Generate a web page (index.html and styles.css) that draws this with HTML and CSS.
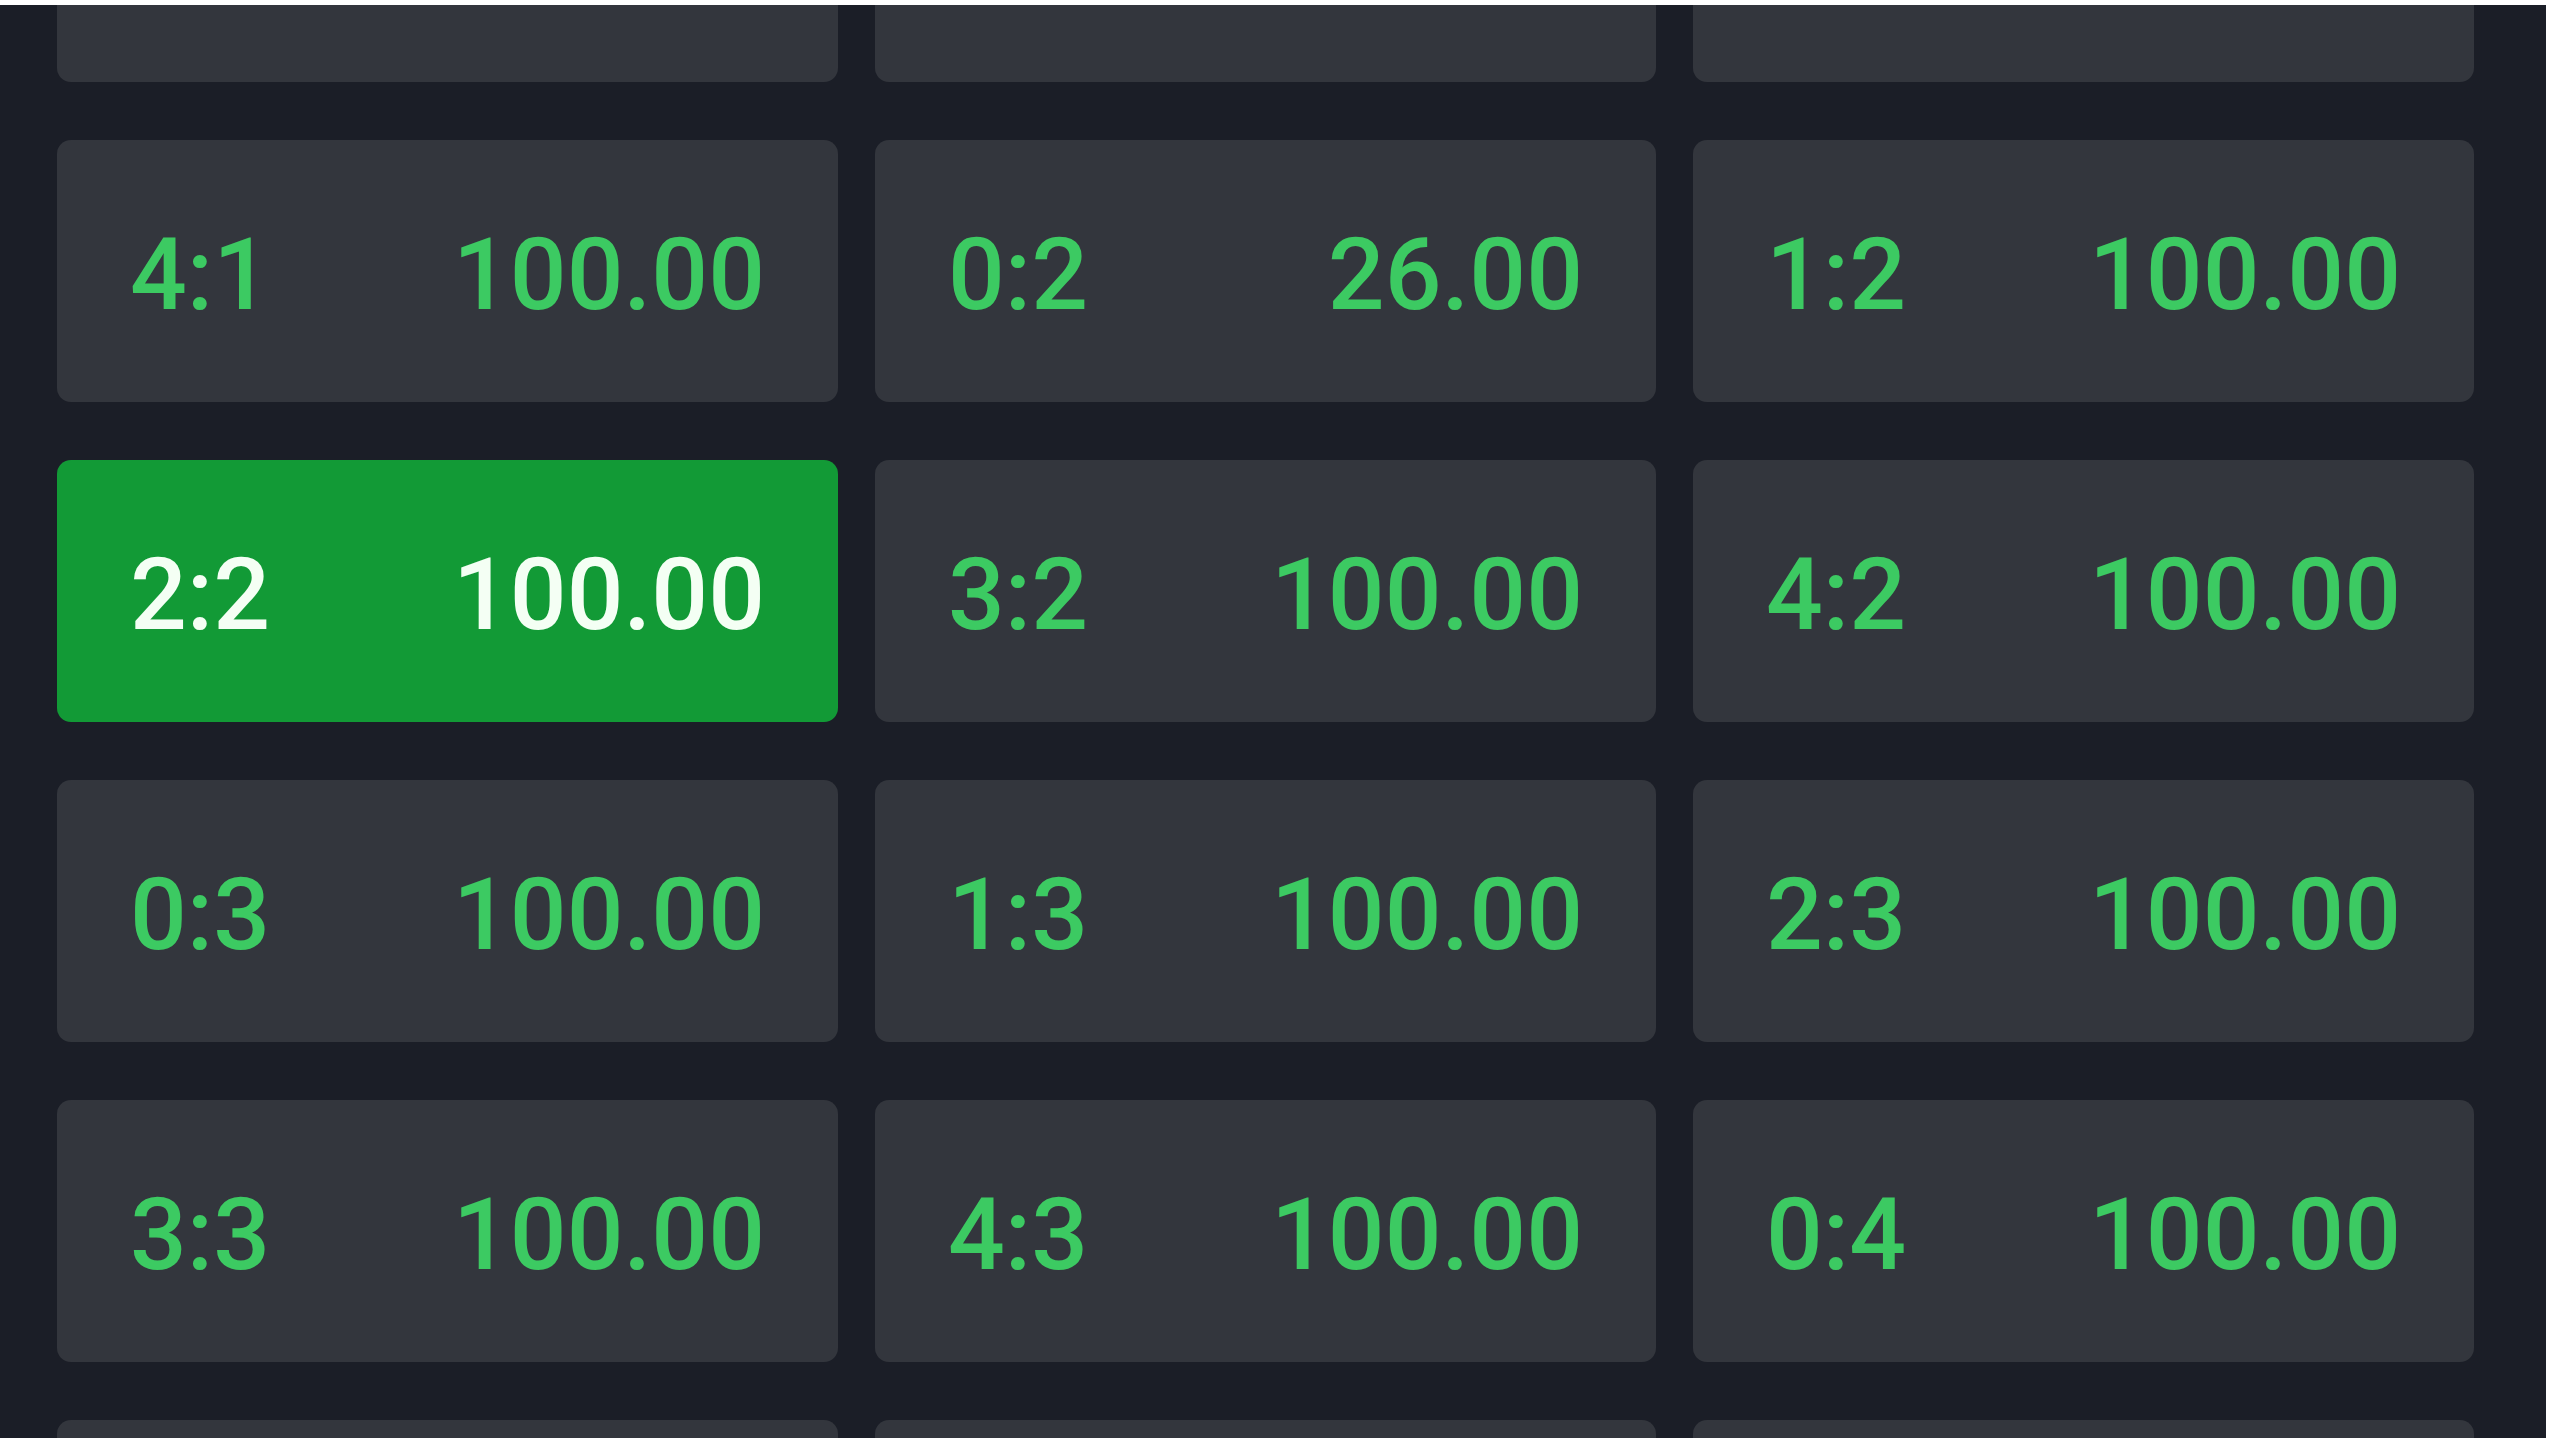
FILE: index.html
```html
<!DOCTYPE html>
<html lang="en">
<head>
<meta charset="utf-8">
<title>Correct score</title>
<link rel="stylesheet" href="styles.css">
</head>
<body>
<div class="viewport">
  <div class="grid">
    <div class="cell"><span class="score">1:1</span><span class="odds">100.00</span></div>
    <div class="cell"><span class="score">2:1</span><span class="odds">100.00</span></div>
    <div class="cell"><span class="score">3:1</span><span class="odds">100.00</span></div>

    <div class="cell"><span class="score">4:1</span><span class="odds">100.00</span></div>
    <div class="cell"><span class="score">0:2</span><span class="odds">26.00</span></div>
    <div class="cell"><span class="score">1:2</span><span class="odds">100.00</span></div>

    <div class="cell selected"><span class="score">2:2</span><span class="odds">100.00</span></div>
    <div class="cell"><span class="score">3:2</span><span class="odds">100.00</span></div>
    <div class="cell"><span class="score">4:2</span><span class="odds">100.00</span></div>

    <div class="cell"><span class="score">0:3</span><span class="odds">100.00</span></div>
    <div class="cell"><span class="score">1:3</span><span class="odds">100.00</span></div>
    <div class="cell"><span class="score">2:3</span><span class="odds">100.00</span></div>

    <div class="cell"><span class="score">3:3</span><span class="odds">100.00</span></div>
    <div class="cell"><span class="score">4:3</span><span class="odds">100.00</span></div>
    <div class="cell"><span class="score">0:4</span><span class="odds">100.00</span></div>

    <div class="cell"><span class="score">1:4</span><span class="odds">100.00</span></div>
    <div class="cell"><span class="score">2:4</span><span class="odds">100.00</span></div>
    <div class="cell"><span class="score">3:4</span><span class="odds">100.00</span></div>
  </div>
</div>
</body>
</html>
```

FILE: styles.css
```css
html, body {
  margin: 0;
  padding: 0;
  background: #ffffff;
}

body {
  padding-top: 5px;
  font-family: Roboto, "Liberation Sans", sans-serif;
}

.viewport {
  width: 2546px;
  height: 1433px;
  background: #1b1e27;
  overflow: hidden;
}

.grid {
  display: grid;
  grid-template-columns: repeat(3, 781px);
  grid-auto-rows: 262px;
  column-gap: 37px;
  row-gap: 58px;
  padding-left: 57px;
  margin-top: -185px;
}

.cell {
  display: flex;
  align-items: center;
  justify-content: space-between;
  padding: 8px 73px 0 73px;
  background: #33363d;
  border-radius: 14px;
  color: #3cca62;
  font-size: 100px;
  font-weight: 500;
  line-height: 1;
}

.cell.selected {
  background: #129a36;
  color: #f4fff4;
}
```
